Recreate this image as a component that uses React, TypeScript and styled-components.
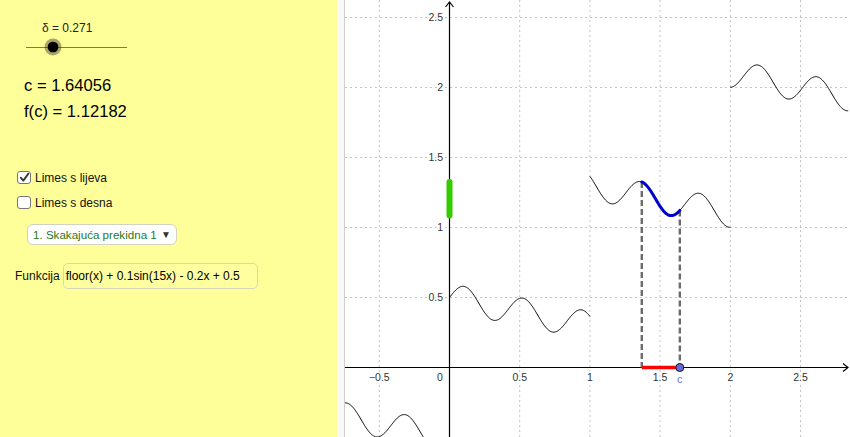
import styled, { createGlobalStyle } from 'styled-components';

const GlobalStyle = createGlobalStyle`
	html, body {
		margin: 0;
		padding: 0;
		background: #ffffff;
	}
	body {
		font-family: 'Liberation Sans', Arial, sans-serif;
	}
`;

// graph coordinate system (page pixels)
const OX = 449.5;
const OY = 367.5;
const SX = 140.4;
const SY = 140;
const LEFT = 345;
const WIDTH = 505;
const HEIGHT = 437;

const C = 1.64056;
const DELTA = 0.271;

const f = (x: number) => Math.floor(x) + 0.1 * Math.sin(15 * x) - 0.2 * x + 0.5;
const px = (x: number) => OX + x * SX;
const py = (y: number) => OY - y * SY;

const curvePath = (a: number, b: number, fn: (x: number) => number = f) => {
	const steps = Math.ceil((b - a) / 0.004);
	let d = '';
	for (let i = 0; i <= steps; i++) {
		const x = a + ((b - a) * i) / steps;
		d += `${i === 0 ? 'M' : 'L'}${px(x).toFixed(2)},${py(fn(x)).toFixed(2)} `;
	}
	return d;
};

const eps = 1e-6;
const segments = [
	curvePath(-0.8, -eps, (x) => -1 + 0.1 * Math.sin(15 * x) - 0.2 * x + 0.5),
	curvePath(0, 1 - eps, (x) => 0.1 * Math.sin(15 * x) - 0.2 * x + 0.5),
	curvePath(1, 2 - eps, (x) => 1 + 0.1 * Math.sin(15 * x) - 0.2 * x + 0.5),
	curvePath(2, 2.84, (x) => 2 + 0.1 * Math.sin(15 * x) - 0.2 * x + 0.5),
];

const a = C - DELTA;
const highlight = curvePath(a, C, (x) => 1 + 0.1 * Math.sin(15 * x) - 0.2 * x + 0.5);

let minF = Infinity;
let maxF = -Infinity;
for (let x = a; x <= C; x += 0.001) {
	const v = f(x);
	minF = Math.min(minF, v);
	maxF = Math.max(maxF, v);
}

const xTicks = [-0.5, 0.5, 1, 1.5, 2, 2.5];
const yTicks = [0.5, 1, 1.5, 2, 2.5];

const App = () => {
	return (
		<>
			<GlobalStyle />
			<Page>
				<Panel>
					<SliderBlock>
						<SliderLabel>δ = 0.271</SliderLabel>
						<SliderRow>
							<Track>
								<Knob $pos={27} />
							</Track>
						</SliderRow>
					</SliderBlock>
					<Values>
						<Value>c = 1.64056</Value>
						<Value>f(c) = 1.12182</Value>
					</Values>
					<Checks>
						<CheckRow>
							<Box>
								<svg width="11" height="11" viewBox="0 0 11 11">
									<path d="M1.8 5.6 L4.3 8.6 L9.4 1.6" fill="none" stroke="#333" strokeWidth="1.8" strokeLinejoin="round" strokeLinecap="round" />
								</svg>
							</Box>
							<CheckText>Limes s lijeva</CheckText>
						</CheckRow>
						<CheckRow>
							<Box />
							<CheckText>Limes s desna</CheckText>
						</CheckRow>
					</Checks>
					<Dropdown>
						<span>1. Skakajuća prekidna 1</span>
						<Caret>▼</Caret>
					</Dropdown>
					<InputRow>
						<InputLabel>Funkcija</InputLabel>
						<FieldBox>floor(x) + 0.1sin(15x) - 0.2x + 0.5</FieldBox>
					</InputRow>
				</Panel>
				<Divider />
				<GraphArea>
					<svg width={WIDTH} height={HEIGHT} viewBox={`${LEFT} 0 ${WIDTH} ${HEIGHT}`}>
						<g stroke="#c4c4c4" strokeWidth="1" strokeDasharray="2 3">
							{xTicks.map((t) => (
								<line key={`gx${t}`} x1={px(t)} y1={0} x2={px(t)} y2={HEIGHT} />
							))}
							{yTicks.map((t) => (
								<line key={`gy${t}`} x1={LEFT} y1={py(t)} x2={LEFT + WIDTH} y2={py(t)} />
							))}
						</g>

						<g stroke="#000" strokeWidth="1.2" fill="none">
							<line x1={LEFT} y1={OY} x2={848} y2={OY} />
							<polyline points={`843,363.5 848,${OY} 843,371.5`} />
							<line x1={OX} y1={HEIGHT} x2={OX} y2={2} />
							<polyline points={`445.5,7 ${OX},2 453.5,7`} />
						</g>

						<TickText>
							{xTicks.map((t) => (
								<text key={`tx${t}`} x={px(t)} y={381} textAnchor="middle">
									{t < 0 ? `\u2212${Math.abs(t)}` : t}
								</text>
							))}
							<text x={440} y={381} textAnchor="middle">0</text>
							{yTicks.map((t) => (
								<text key={`ty${t}`} x={443} y={py(t) + 3.8} textAnchor="end">
									{t}
								</text>
							))}
						</TickText>

						<g stroke="#000" strokeWidth="1" fill="none">
							{segments.map((d, i) => (
								<path key={i} d={d} />
							))}
						</g>

						<g stroke="#6b6b6b" strokeWidth="2.4" strokeDasharray="6 3">
							<line x1={px(a)} y1={py(f(a))} x2={px(a)} y2={OY} />
							<line x1={px(C)} y1={py(f(C))} x2={px(C)} y2={OY} />
						</g>

						<path d={highlight} stroke="#0000cc" strokeWidth="3" fill="none" strokeLinecap="round" />
						<line x1={OX} y1={py(maxF)} x2={OX} y2={py(minF)} stroke="#33cc00" strokeWidth="6" strokeLinecap="round" />
						<line x1={px(a)} y1={OY} x2={px(C)} y2={OY} stroke="#ff0000" strokeWidth="3.5" />
						<circle cx={px(C)} cy={OY} r="4" fill="#6666dd" stroke="#1a1a1a" strokeWidth="1" />
						<PointLabel x={px(C)} y={383} textAnchor="middle">c</PointLabel>
					</svg>
				</GraphArea>
			</Page>
		</>
	);
};

export default App;

const Page = styled.div`
	display: flex;
	width: 850px;
	height: 437px;
	overflow: hidden;
`;

const Panel = styled.div`
	width: 337px;
	flex-shrink: 0;
	background: #ffff99;
	display: flex;
	flex-direction: column;
	color: #000;
`;

const Divider = styled.div`
	width: 7px;
	flex-shrink: 0;
	background: #f8f8f8;
	border-right: 1px solid #cfcfcf;
`;

const GraphArea = styled.div`
	flex: 1;
	background: #ffffff;
	svg {
		display: block;
	}
`;

const SliderBlock = styled.div`
	margin-top: 21px;
	display: flex;
	flex-direction: column;
`;

const SliderLabel = styled.div`
	padding-left: 42px;
	font-size: 12px;
	line-height: 14px;
	color: #222;
`;

const SliderRow = styled.div`
	height: 25px;
	display: flex;
	align-items: center;
	padding-left: 26px;
`;

const Track = styled.div`
	position: relative;
	width: 101px;
	height: 1px;
	background: #777;
`;

const Knob = styled.div<{ $pos: number }>`
	position: absolute;
	left: ${({ $pos }) => $pos}px;
	top: 0;
	width: 11px;
	height: 11px;
	border-radius: 50%;
	background: #000;
	border: 3px solid rgba(60, 60, 40, 0.45);
	background-clip: padding-box;
	transform: translate(-50%, -50%);
`;

const Values = styled.div`
	margin-top: 13px;
	padding-left: 24px;
`;

const Value = styled.div`
	font-size: 16.6px;
	line-height: 26px;
`;

const Checks = styled.div`
	margin-top: 40px;
	padding-left: 17px;
`;

const CheckRow = styled.div`
	height: 25px;
	display: flex;
	align-items: center;
	gap: 4px;
`;

const Box = styled.span`
	box-sizing: border-box;
	width: 14px;
	height: 13px;
	border: 1px solid #777;
	border-radius: 3px;
	background: #fff;
	display: flex;
	align-items: center;
	justify-content: center;
	svg {
		display: block;
	}
`;

const CheckText = styled.span`
	font-size: 12px;
	color: #111;
`;

const Dropdown = styled.div`
	box-sizing: border-box;
	margin: 9px 0 0 27px;
	width: 150px;
	height: 21px;
	border: 1px solid #d2d2c0;
	border-radius: 6px;
	background: #fff;
	display: flex;
	align-items: center;
	justify-content: space-between;
	padding: 0 5px 0 5px;
	font-size: 11.6px;
	color: #1f7a1f;
`;

const Caret = styled.span`
	margin-left: 4px;
	font-size: 10px;
	color: #333;
`;

const InputRow = styled.div`
	margin-top: 18px;
	padding-left: 15px;
	display: flex;
	align-items: center;
	gap: 3px;
`;

const InputLabel = styled.span`
	font-size: 12px;
	color: #111;
`;

const FieldBox = styled.div`
	box-sizing: border-box;
	width: 195px;
	height: 26px;
	border: 1px solid #d6d6b8;
	border-radius: 5px;
	background: #ffffa0;
	display: flex;
	align-items: center;
	padding-left: 2px;
	font-size: 12px;
	color: #000;
`;

const TickText = styled.g`
	font-family: 'Liberation Sans', Arial, sans-serif;
	font-size: 10.5px;
	fill: #333;
	stroke: #fff;
	stroke-width: 3px;
	paint-order: stroke;
`;

const PointLabel = styled.text`
	font-family: 'Liberation Sans', Arial, sans-serif;
	font-size: 11px;
	fill: #7070f0;
`;
